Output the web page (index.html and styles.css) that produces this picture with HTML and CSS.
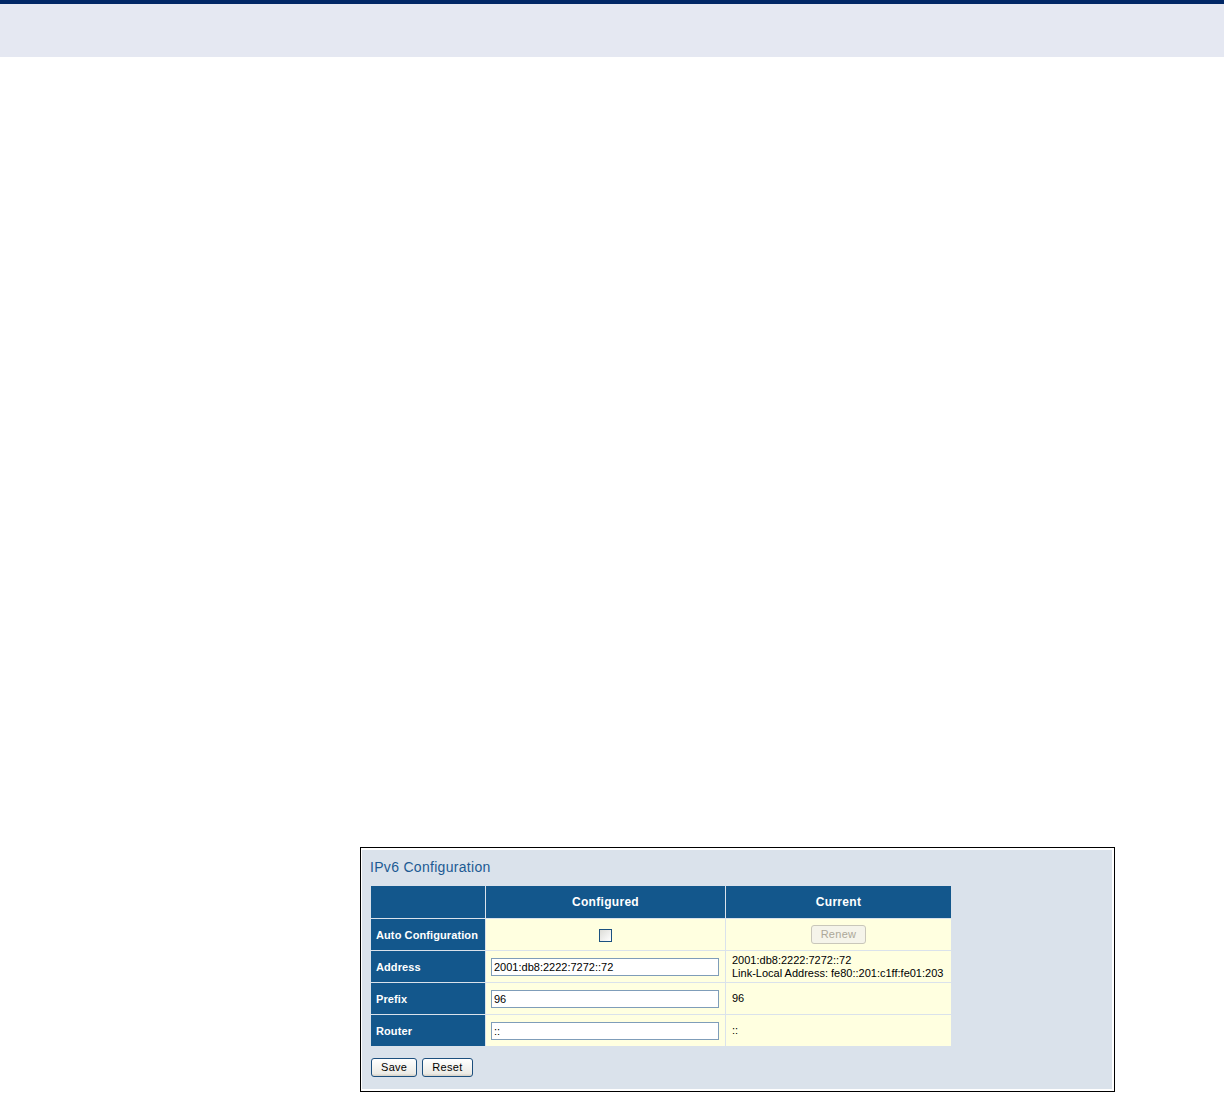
FILE: index.html
```html
<!DOCTYPE html>
<html lang="en">
<head>
    <meta charset="UTF-8">
    <title>IPv6 Configuration</title>
    <link rel="stylesheet" href="styles.css">
</head>
<body>
    <header class="top-band"></header>
    <main class="page">
        <figure class="shot">
            <div class="panel">
                <h1 class="panel-title">IPv6 Configuration</h1>
                <table class="config-table">
                    <colgroup>
                        <col class="col-label">
                        <col class="col-configured">
                        <col class="col-current">
                    </colgroup>
                    <thead>
                        <tr>
                            <th></th>
                            <th>Configured</th>
                            <th>Current</th>
                        </tr>
                    </thead>
                    <tbody>
                        <tr>
                            <th class="row-label">Auto Configuration</th>
                            <td class="center"><input type="checkbox" class="check"></td>
                            <td class="center"><button class="btn" disabled>Renew</button></td>
                        </tr>
                        <tr>
                            <th class="row-label">Address</th>
                            <td class="field"><input type="text" class="text-input" value="2001:db8:2222:7272::72"></td>
                            <td class="value">2001:db8:2222:7272::72<br>Link-Local Address: fe80::201:c1ff:fe01:203</td>
                        </tr>
                        <tr>
                            <th class="row-label">Prefix</th>
                            <td class="field"><input type="text" class="text-input" value="96"></td>
                            <td class="value">96</td>
                        </tr>
                        <tr>
                            <th class="row-label">Router</th>
                            <td class="field"><input type="text" class="text-input" value="::"></td>
                            <td class="value">::</td>
                        </tr>
                    </tbody>
                </table>
                <div class="actions">
                    <button class="btn">Save</button>
                    <button class="btn">Reset</button>
                </div>
            </div>
        </figure>
    </main>
</body>
</html>
```

FILE: styles.css
```css
body {
    margin: 0;
    background-color: #ffffff;
    font-family: "Liberation Sans", Arial, sans-serif;
}
.top-band {
    height: 53px;
    border-top: 4px solid #002766;
    background-color: #e5e8f2;
}
.page {
    padding: 790px 0 0 360px;
}
.shot {
    margin: 0;
    width: 750px;
    padding: 2px 2px 2px 1px;
    border: 1px solid #000000;
    background-color: #ffffff;
}
.panel {
    background-color: #dae2eb;
    padding: 9px 8px 12px 8px;
    height: 218px;
}
.panel-title {
    margin: 0 0 10px 0;
    font-size: 14px;
    line-height: 16px;
    font-weight: normal;
    letter-spacing: 0.3px;
    color: #1c5a93;
}
.config-table {
    border-collapse: separate;
    border-spacing: 1px;
    table-layout: fixed;
    width: 582px;
    font-size: 11px;
}
.col-label { width: 114px; }
.col-configured { width: 239px; }
.col-current { width: 225px; }
.config-table th,
.config-table td {
    padding: 0;
}
.config-table thead th {
    height: 32px;
    background-color: #13578c;
    color: #ffffff;
    font-size: 12px;
    letter-spacing: 0.3px;
    text-align: center;
}
.config-table tbody tr {
    height: 31px;
}
.config-table .row-label {
    background-color: #13578c;
    color: #ffffff;
    text-align: left;
    padding-left: 5px;
    letter-spacing: 0.1px;
}
.config-table td {
    background-color: #ffffe0;
    color: #000000;
}
.center {
    text-align: center;
}
.config-table .field {
    padding-left: 5px;
}
.config-table .value {
    padding-left: 6px;
    line-height: 13px;
}
.check {
    appearance: none;
    -webkit-appearance: none;
    margin: 1px 0 0 0;
    width: 13px;
    height: 13px;
    border: 1px solid #1c5180;
    background: linear-gradient(135deg, #dcdcd7, #ffffff);
    vertical-align: middle;
}
.text-input {
    box-sizing: border-box;
    width: 228px;
    height: 18px;
    margin: 0;
    padding: 0 2px;
    border: 1px solid #7f9db9;
    background-color: #ffffff;
    font-family: "Liberation Sans", Arial, sans-serif;
    font-size: 11px;
    color: #000000;
    vertical-align: middle;
}
.btn {
    box-sizing: border-box;
    height: 19px;
    padding: 0 9px;
    border: 1px solid #1c4f7e;
    border-radius: 3px;
    background: linear-gradient(#ffffff, #ecebe6 85%, #d6d0c5);
    font-family: "Liberation Sans", Arial, sans-serif;
    font-size: 11px;
    line-height: 17px;
    letter-spacing: 0.3px;
    color: #000000;
    vertical-align: middle;
}
.btn:disabled {
    border-color: #c9c7ba;
    background: #f5f4ea;
    color: #aca899;
}
.actions {
    display: flex;
    gap: 5px;
    margin-top: 11px;
    padding-left: 1px;
}
```
